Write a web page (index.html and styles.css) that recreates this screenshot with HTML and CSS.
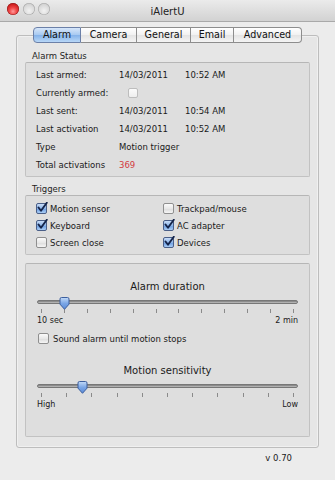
FILE: index.html
```html
<!DOCTYPE html>
<html>
<head>
<meta charset="utf-8">
<link rel="stylesheet" href="styles.css">
</head>
<body>
<div class="window">
  <div class="titlebar">
    <div class="lights">
      <span class="light red"></span>
      <span class="light gray"></span>
      <span class="light gray"></span>
    </div>
    <div class="title">iAlertU</div>
    <div></div>
  </div>

  <div class="tabview">
    <div class="tabs">
      <span class="tab selected">Alarm</span>
      <span class="tab">Camera</span>
      <span class="tab">General</span>
      <span class="tab">Email</span>
      <span class="tab">Advanced</span>
    </div>
    <div class="panel">
      <div class="group-label">Alarm Status</div>
      <div class="box status">
        <span class="lbl">Last armed:</span><span class="val">14/03/2011</span><span class="val">10:52 AM</span>
        <span class="lbl">Currently armed:</span><span class="val"><span class="cb cb-inline"></span></span><span></span>
        <span class="lbl">Last sent:</span><span class="val">14/03/2011</span><span class="val">10:54 AM</span>
        <span class="lbl">Last activation</span><span class="val">14/03/2011</span><span class="val">10:52 AM</span>
        <span class="lbl">Type</span><span class="val span2">Motion trigger</span>
        <span class="lbl">Total activations</span><span class="val red-text span2">369</span>
      </div>

      <div class="group-label mt">Triggers</div>
      <div class="box triggers">
        <label class="check"><span class="cb on"><svg viewBox="0 0 12 12" width="12" height="12"><path d="M2.5 5.5 L5 8.8 L10.8 0.8" fill="none" stroke="#14244a" stroke-width="1.9" stroke-linecap="round" stroke-linejoin="round"/></svg></span>Motion sensor</label>
        <label class="check"><span class="cb"></span>Trackpad/mouse</label>
        <label class="check"><span class="cb on"><svg viewBox="0 0 12 12" width="12" height="12"><path d="M2.5 5.5 L5 8.8 L10.8 0.8" fill="none" stroke="#14244a" stroke-width="1.9" stroke-linecap="round" stroke-linejoin="round"/></svg></span>Keyboard</label>
        <label class="check"><span class="cb on"><svg viewBox="0 0 12 12" width="12" height="12"><path d="M2.5 5.5 L5 8.8 L10.8 0.8" fill="none" stroke="#14244a" stroke-width="1.9" stroke-linecap="round" stroke-linejoin="round"/></svg></span>AC adapter</label>
        <label class="check"><span class="cb"></span>Screen close</label>
        <label class="check"><span class="cb on"><svg viewBox="0 0 12 12" width="12" height="12"><path d="M2.5 5.5 L5 8.8 L10.8 0.8" fill="none" stroke="#14244a" stroke-width="1.9" stroke-linecap="round" stroke-linejoin="round"/></svg></span>Devices</label>
      </div>

      <div class="box sliders">
        <div class="slider-title">Alarm duration</div>
        <div class="slider">
          <div class="track"></div>
          <svg class="knob knob1" viewBox="0 0 11 13" width="11" height="13"><defs><linearGradient id="kg1" x1="0" y1="0" x2="0" y2="1"><stop offset="0" stop-color="#c4dbf8"/><stop offset="0.5" stop-color="#7aa6e6"/><stop offset="1" stop-color="#5a8ad8"/></linearGradient></defs><path d="M1 2 Q1 0.5 2.5 0.5 H8.5 Q10 0.5 10 2 V7.2 L5.5 12.3 L1 7.2 Z" fill="url(#kg1)" stroke="#3c5f9e" stroke-width="1"/></svg>
          <div class="ticks">
            <i></i><i></i><i></i><i></i><i></i><i></i><i></i><i></i><i></i><i></i><i></i><i></i>
          </div>
        </div>
        <div class="slider-labels"><span>10 sec</span><span>2 min</span></div>
        <label class="check sound"><span class="cb"></span>Sound alarm until motion stops</label>

        <div class="slider-title mt2">Motion sensitivity</div>
        <div class="slider">
          <div class="track"></div>
          <svg class="knob knob2" viewBox="0 0 11 13" width="11" height="13"><defs><linearGradient id="kg2" x1="0" y1="0" x2="0" y2="1"><stop offset="0" stop-color="#c4dbf8"/><stop offset="0.5" stop-color="#7aa6e6"/><stop offset="1" stop-color="#5a8ad8"/></linearGradient></defs><path d="M1 2 Q1 0.5 2.5 0.5 H8.5 Q10 0.5 10 2 V7.2 L5.5 12.3 L1 7.2 Z" fill="url(#kg2)" stroke="#3c5f9e" stroke-width="1"/></svg>
          <div class="ticks">
            <i></i><i></i><i></i><i></i><i></i><i></i><i></i><i></i><i></i><i></i><i></i>
          </div>
        </div>
        <div class="slider-labels"><span>High</span><span>Low</span></div>
      </div>
    </div>
  </div>

  <div class="version">v 0.70</div>
</div>
</body>
</html>
```

FILE: styles.css
```css
* { box-sizing: border-box; }

html, body {
  margin: 0;
  padding: 0;
  background: #ececec;
}

body {
  font-family: "DejaVu Sans", "Noto Sans", sans-serif;
  font-size: 8.5px;
  color: #1a1a1a;
}

.window {
  width: 335px;
  height: 480px;
  background: #ececec;
  overflow: hidden;
}

/* Title bar */
.titlebar {
  height: 22px;
  display: grid;
  grid-template-columns: 1fr auto 1fr;
  align-items: center;
  background: linear-gradient(#ebebeb, #d2d2d2);
  border-bottom: 1px solid #a9a9a9;
}

.lights {
  display: flex;
  gap: 3.5px;
  padding-left: 7px;
  margin-top: -3px;
}

.light {
  width: 12px;
  height: 12px;
  border-radius: 50%;
}

.light.red {
  background: radial-gradient(circle at 50% 70%, #ff9a9a 0, #f04848 35%, #c81818 75%, #a01010 100%);
  box-shadow: inset 0 0 0 0.5px #8a1a1a;
}

.light.gray {
  background: radial-gradient(circle at 50% 65%, #f2f2f2 0, #dcdcdc 50%, #c0c0c0 100%);
  box-shadow: inset 0 0 0 0.6px #a8a8a8;
}

.title {
  font-size: 10px;
  color: #222;
  padding-top: 1px;
}

/* Tab view */
.tabview {
  margin: 5px 16px 0;
}

.tabs {
  position: relative;
  z-index: 1;
  display: flex;
  justify-content: center;
  height: 16px;
  margin-bottom: -8px;
}

.tab {
  height: 16px;
  line-height: 14px;
  font-size: 9.6px;
  color: #111;
  border: 1px solid #8d8d8d;
  border-left: none;
  background: linear-gradient(#ffffff, #f1f1f1 50%, #e3e3e3 51%, #f4f4f4);
  text-align: center;
}

.tab:nth-child(1) { width: 48px; border-left: 1px solid #7a8aa8; border-radius: 4px 0 0 4px; }
.tab:nth-child(2) { width: 56px; }
.tab:nth-child(3) { width: 54px; }
.tab:nth-child(4) { width: 43px; }
.tab:nth-child(5) { width: 68px; border-radius: 0 4px 4px 0; }

.tab.selected {
  background: linear-gradient(#d6e6fa, #a7c9f1 50%, #84b2ea 51%, #b8d7f7);
  border-color: #6b80a8;
}

.panel {
  background: #e6e6e6;
  border: 1px solid #bdbdbd;
  border-radius: 3px;
  box-shadow: inset 0 0 0 1px #f0f0f0;
  padding: 14px 8px 10px;
}

.group-label {
  height: 12px;
  line-height: 12px;
  padding-left: 7px;
  color: #1e1e1e;
}

.group-label.mt { margin-top: 6px; }

.box {
  background: #dedede;
  border: 1px solid #c2c2c2;
  border-top-color: #b6b6b6;
  border-radius: 2px;
}

/* Alarm status */
.status {
  display: grid;
  grid-template-columns: 83px 66px 1fr;
  grid-auto-rows: 18px;
  align-items: center;
  padding: 3px 10px 2px;
}

.status .span2 { grid-column: span 2; }

.red-text { color: #d33a3f; }

/* Checkboxes */
.cb {
  position: relative;
  display: inline-block;
  width: 11px;
  height: 11px;
  border: 1px solid #8f8f8f;
  border-radius: 2px;
  background: linear-gradient(#fafafa, #e8e8e8 50%, #dadada 51%, #f6f6f6);
  flex: none;
}

.cb.on {
  border-color: #4a5f88;
  background: linear-gradient(#c8dcf7, #8db6ea 50%, #6a9ce2 51%, #a9cdf5);
}

.cb svg {
  position: absolute;
  left: -1px;
  top: -2px;
}

.cb-inline {
  margin-left: 9px;
  width: 10px;
  height: 10px;
  border-color: #bdbdbd;
  background: linear-gradient(#fbfbfb, #eeeeee);
  vertical-align: middle;
}

/* Triggers */
.triggers {
  display: grid;
  grid-template-columns: 127px 1fr;
  grid-auto-rows: 17px;
  align-items: center;
  padding: 4px 10px 3px;
}

.check {
  display: flex;
  align-items: center;
  gap: 3px;
}

/* Sliders */
.box.sliders {
  margin-top: 8px;
  padding: 16px 11px 25px;
}

.slider-title {
  height: 14px;
  line-height: 14px;
  text-align: center;
  font-size: 10px;
  color: #1a1a1a;
}

.slider-title.mt2 { margin-top: 20px; }

.slider {
  position: relative;
  height: 21px;
  padding-top: 6px;
}

.track {
  height: 4px;
  border-radius: 2px;
  background: linear-gradient(#7c7c7c, #a2a2a2 60%, #c8c8c8);
  border: 0.5px solid #777;
}

.ticks {
  display: flex;
  justify-content: space-between;
  padding: 0 4px 0 4px;
  margin-top: 5px;
}

.ticks i {
  display: block;
  width: 1px;
  height: 4px;
  background: #8a8a8a;
}

.knob {
  position: absolute;
  top: 3px;
}

.knob1 { left: 22px; }
.knob2 { left: 40px; }

.slider-labels {
  display: flex;
  justify-content: space-between;
  height: 12px;
  line-height: 12px;
  font-size: 8px;
  color: #1a1a1a;
}

.check.sound {
  margin-top: 6px;
  height: 11px;
  padding-left: 1px;
  gap: 4px;
}

.version {
  margin-top: 4px;
  height: 12px;
  line-height: 12px;
  text-align: right;
  padding-right: 43px;
  font-size: 8.5px;
}
```
